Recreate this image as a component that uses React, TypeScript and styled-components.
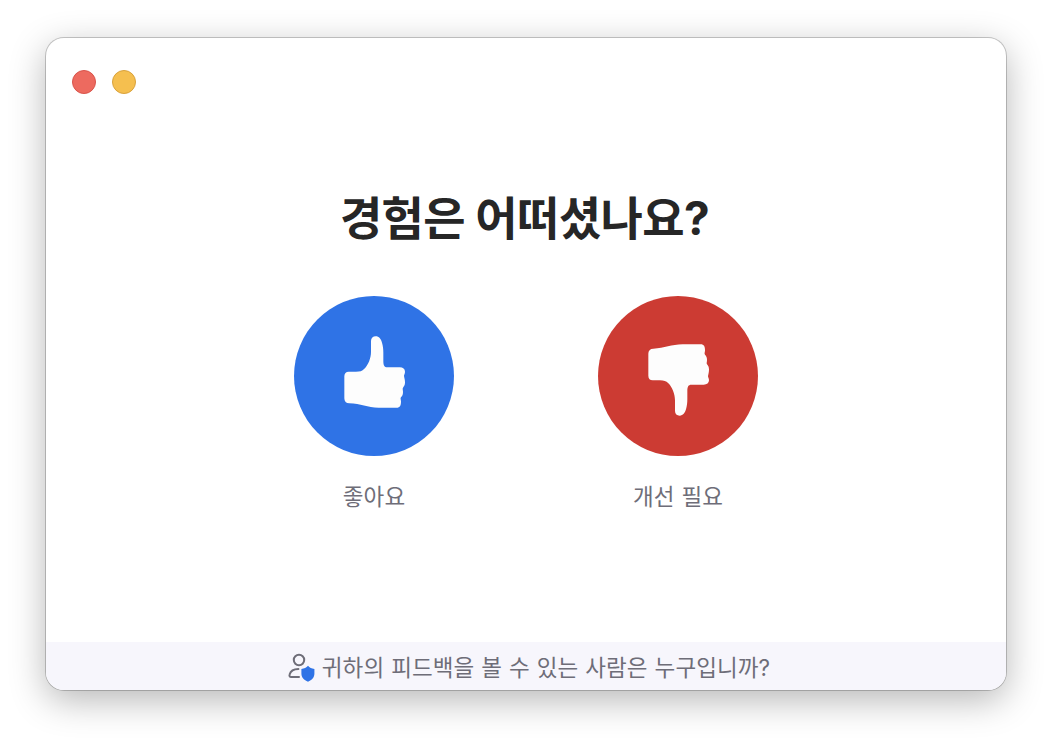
import React from "react";
import styled, { createGlobalStyle } from "styled-components";

const THUMB_PATH =
    "M56 140 H78 C90 140 96 138 103 131 C115 119 123 99 123 80 V48 C123 39 129 34 137 34 C147 34 153 42 156 53 C159 64 160 72 160 84 V108 C160 121 163 127 172 127 H209 C219 127 225 132 225 140 C225 146 222 149 222 152 C222 156 225 163 225 172 C225 181 222 184 219 188 C217 191 219 195 219 201 C219 209 217 213 213 217 C210 220 213 224 213 230 C213 241 210 248 200 248 H146 C112 248 92 236 58 235 C48 235 43 229 43 220 V154 C43 145 48 140 56 140 Z";

type FeedbackOptionProps = {
    label: string;
    color: string;
    isDown?: boolean;
};

const FeedbackOption = (props: FeedbackOptionProps) => {
    return (
        <OptionWrap>
            <OptionButton $color={props.color} aria-label={props.label}>
                <ThumbIcon viewBox="-12 9 288 288" $isDown={props.isDown}>
                    <path d={THUMB_PATH} />
                </ThumbIcon>
            </OptionButton>
            <OptionLabel>{props.label}</OptionLabel>
        </OptionWrap>
    );
};

const PrivacyIcon = () => (
    <PrivacySvg viewBox="0 0 28 30">
        <g fill="none" stroke="#6e6d78" strokeWidth="2" strokeLinecap="round">
            <circle cx="12" cy="7" r="5.2" />
            <path d="M12 24 H4.2 C2.6 24 2.2 22.9 2.6 21.6 C3.6 18 6.4 16.1 11.4 16.1" />
        </g>
        <path
            fill="#2f73e6"
            d="M21 12.8 C22.6 14.9 24.6 15.7 27.4 15.9 V20.5 C27.4 24.6 24.9 27.1 21 28.8 C17.1 27.1 14.4 24.6 14.4 20.5 V15.9 C17.2 15.7 19.4 14.9 21 12.8 Z"
        />
    </PrivacySvg>
);

export default function App() {
    return (
        <>
            <GlobalStyle />
            <Page>
                <Window>
                    <TitleBar>
                        <WindowDot $color="#ed6a5f" $border="#d9544b" />
                        <WindowDot $color="#f5bf4f" $border="#d9a23c" />
                    </TitleBar>
                    <Content>
                        <Title>경험은 어떠셨나요?</Title>
                        <OptionList>
                            <FeedbackOption label="좋아요" color="#2f73e6" />
                            <FeedbackOption
                                label="개선 필요"
                                color="#cc3b33"
                                isDown
                            />
                        </OptionList>
                    </Content>
                    <Footer>
                        <PrivacyIcon />
                        <FooterText>
                            귀하의 피드백을 볼 수 있는 사람은 누구입니까?
                        </FooterText>
                    </Footer>
                </Window>
            </Page>
        </>
    );
}

const GlobalStyle = createGlobalStyle`
    body {
        margin: 0;
        background: #fff;
        font-family: Inter, "Noto Sans CJK KR", sans-serif;
    }
`;
const Page = styled.div`
    box-sizing: border-box;
    width: 1052px;
    height: 744px;
    padding: 38px 46px 54px;
    overflow: hidden;
`;
const Window = styled.div`
    display: flex;
    flex-direction: column;
    height: 652px;
    border-radius: 18px;
    background: #fff;
    overflow: hidden;
    box-shadow: 0 0 0 1px rgba(0, 0, 0, 0.2), 0 10px 36px rgba(0, 0, 0, 0.29);
`;
const TitleBar = styled.div`
    display: flex;
    gap: 16px;
    padding: 32px 26px 0;
`;
const WindowDot = styled.span<{ $color: string; $border: string }>`
    box-sizing: border-box;
    width: 24px;
    height: 24px;
    border: 1px solid ${(props) => props.$border};
    border-radius: 50%;
    background: ${(props) => props.$color};
`;
const Content = styled.div`
    display: flex;
    flex: 1;
    flex-direction: column;
    align-items: center;
    padding-top: 92px;
`;
const Title = styled.h1`
    height: 64px;
    margin: 0;
    padding-right: 3px;
    color: #262626;
    font-size: 46px;
    font-weight: 700;
    line-height: 64px;
    letter-spacing: -0.6px;
    white-space: nowrap;
`;
const OptionList = styled.div`
    display: flex;
    gap: 144px;
    margin-top: 46px;
`;
const OptionWrap = styled.div`
    display: flex;
    flex-direction: column;
    align-items: center;
    width: 160px;
`;
const OptionButton = styled.button<{ $color: string }>`
    display: flex;
    align-items: center;
    justify-content: center;
    width: 160px;
    height: 160px;
    padding: 0;
    border: none;
    border-radius: 50%;
    background: ${(props) => props.$color};
`;
const ThumbIcon = styled.svg<{ $isDown?: boolean }>`
    width: 96px;
    height: 96px;
    fill: #fdfdfd;
    transform: ${(props) => (props.$isDown ? "scaleY(-1)" : "none")};
`;
const OptionLabel = styled.span`
    margin-top: 25px;
    color: #6e6d78;
    font-size: 22.5px;
    line-height: 32px;
    letter-spacing: 0.1px;
    word-spacing: 0.5px;
    white-space: nowrap;
`;
const Footer = styled.div`
    box-sizing: border-box;
    display: flex;
    align-items: center;
    justify-content: center;
    gap: 7px;
    height: 48px;
    padding-left: 5px;
    background: #f7f6fc;
`;
const PrivacySvg = styled.svg`
    width: 28px;
    height: 30px;
    margin-top: 4px;
`;
const FooterText = styled.span`
    padding-top: 3px;
    color: #6e6d78;
    font-size: 22.5px;
    line-height: 32px;
    letter-spacing: 0.1px;
    word-spacing: 0.5px;
    white-space: nowrap;
`;
